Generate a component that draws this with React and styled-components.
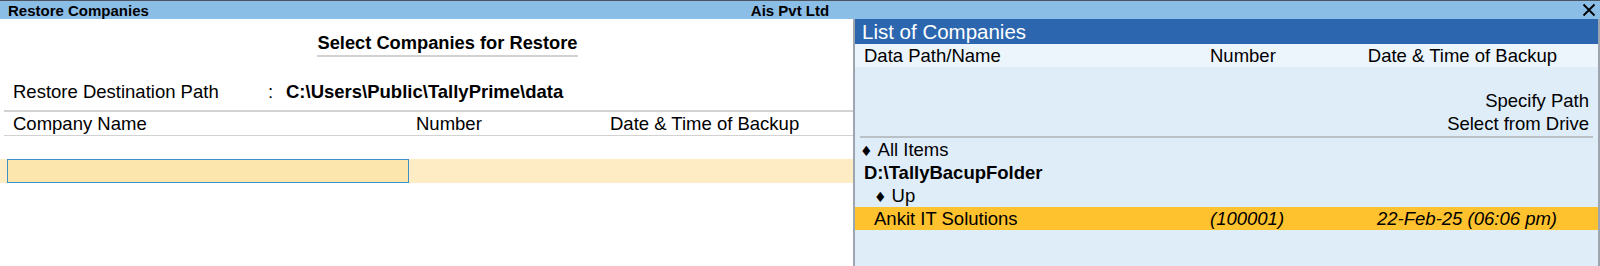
// Restore Companies screen - company list picker
import React from "react";
import styled, { createGlobalStyle } from "styled-components";

const GlobalStyle = createGlobalStyle`
  html, body {
    margin: 0;
    padding: 0;
    background: #ffffff;
  }
  body {
    font-family: "Liberation Sans", Arial, "DejaVu Sans", sans-serif;
    color: #000;
  }
`;

const Screen = styled.div`
  width: 1600px;
  height: 266px;
  display: flex;
  flex-direction: column;
  overflow: hidden;
`;

const TitleBar = styled.div`
  height: 18px;
  border-top: 1px solid #4b5661;
  background: #8bbee7;
  display: grid;
  grid-template-columns: 1fr auto 1fr;
  align-items: center;
  padding: 0 4px 0 8px;
  font-size: 15px;
  font-weight: bold;
`;

const Centre = styled.span`
  margin-right: 24px;
`;

const Close = styled.div`
  justify-self: end;
  display: flex;
  align-items: center;
`;

const Main = styled.div`
  flex: 1;
  display: flex;
  min-height: 0;
`;

const LeftPane = styled.div`
  width: 853px;
  display: flex;
  flex-direction: column;
  font-size: 18.5px;
`;

const HeadingRow = styled.div`
  display: flex;
  justify-content: center;
  padding: 13px 0 0 42px;
`;

const Heading = styled.div`
  font-weight: bold;
  font-size: 18.3px;
  line-height: 22px;
  padding-bottom: 1px;
  border-bottom: 2px solid #d2d2d2;
`;

const FieldRow = styled.div`
  display: grid;
  grid-template-columns: 255px 18px auto;
  align-items: center;
  line-height: 22px;
  padding: 24px 0 0 13px;
`;

const Value = styled.span`
  font-weight: ${(p) => (p.$bold ? "bold" : "normal")};
`;

const TableHead = styled.div`
  margin: 7px 0 0 4px;
  border-top: 2px solid #d2d2d2;
  border-bottom: 1px solid #d2d2d2;
  display: grid;
  grid-template-columns: 403px 194px 1fr;
  line-height: 23px;
  padding-left: 9px;
`;

const EntryRow = styled.div`
  margin-top: 23px;
  height: 24px;
  display: flex;
  background: #feedc4;
  padding-left: 7px;
`;

const EntryInput = styled.div`
  width: 402px;
  box-sizing: border-box;
  border: 1.5px solid #3b91ca;
  background: #fde5ae;
`;

const RightPane = styled.div`
  flex: 1;
  display: flex;
  flex-direction: column;
  background: #dfedf9;
  border-left: 2px solid #9da6ae;
  border-right: 2px solid #9da6ae;
  font-size: 18.5px;
`;

const PanelTitle = styled.div`
  height: 25px;
  background: #2b66ae;
  color: #fff;
  font-size: 20.5px;
  line-height: 25px;
  padding-left: 7px;
`;

const ListRow = styled.div`
  display: grid;
  grid-template-columns: 346px 1fr auto;
  align-items: center;
  height: 23px;
  padding: 0 41px 0 9px;
  background: ${(p) => (p.$head ? "#ecf5fc" : p.$active ? "#fec22e" : "transparent")};
  font-weight: ${(p) => (p.$bold ? "bold" : "normal")};
`;

const Cell = styled.span`
  margin-left: ${(p) => p.$indent || 0}px;
  font-style: ${(p) => (p.$italic ? "italic" : "normal")};
`;

const Options = styled.div`
  display: flex;
  flex-direction: column;
  align-items: flex-end;
  padding: 22px 9px 1px 0;
  line-height: 23px;
`;

const Divider = styled.div`
  height: 2px;
  margin: 0 5px 0 5px;
  background: #b9c0c6;
`;

const Bullet = styled.span`
  font-family: "DejaVu Sans", sans-serif;
  font-size: 14px;
  margin-right: 5px;
`;

const CloseIcon = () => (
  <svg width="14" height="14" viewBox="0 0 14 14">
    <path d="M1.5 1.5 L12.5 12.5 M12.5 1.5 L1.5 12.5" stroke="#000" strokeWidth="1.8" />
  </svg>
);

const App = () => {
  return (
    <Screen>
      <GlobalStyle />
      <TitleBar>
        <span>Restore Companies</span>
        <Centre>Ais Pvt Ltd</Centre>
        <Close>
          <CloseIcon />
        </Close>
      </TitleBar>
      <Main>
        <LeftPane>
          <HeadingRow>
            <Heading>Select Companies for Restore</Heading>
          </HeadingRow>
          <FieldRow>
            <span>Restore Destination Path</span>
            <span>:</span>
            <Value $bold>C:\Users\Public\TallyPrime\data</Value>
          </FieldRow>
          <TableHead>
            <span>Company Name</span>
            <span>Number</span>
            <span>Date &amp; Time of Backup</span>
          </TableHead>
          <EntryRow>
            <EntryInput />
          </EntryRow>
        </LeftPane>
        <RightPane>
          <PanelTitle>List of Companies</PanelTitle>
          <ListRow $head>
            <Cell>Data Path/Name</Cell>
            <Cell>Number</Cell>
            <Cell>Date &amp; Time of Backup</Cell>
          </ListRow>
          <Options>
            <span>Specify Path</span>
            <span>Select from Drive</span>
          </Options>
          <Divider />
          <ListRow>
            <Cell $indent={-4}>
              <Bullet>♦</Bullet>All Items
            </Cell>
          </ListRow>
          <ListRow $bold>
            <Cell>D:\TallyBacupFolder</Cell>
          </ListRow>
          <ListRow>
            <Cell $indent={10}>
              <Bullet>♦</Bullet>Up
            </Cell>
          </ListRow>
          <ListRow $active>
            <Cell $indent={10}>Ankit IT Solutions</Cell>
            <Cell $italic>(100001)</Cell>
            <Cell $italic>22-Feb-25 (06:06 pm)</Cell>
          </ListRow>
        </RightPane>
      </Main>
    </Screen>
  );
};

export default App;
